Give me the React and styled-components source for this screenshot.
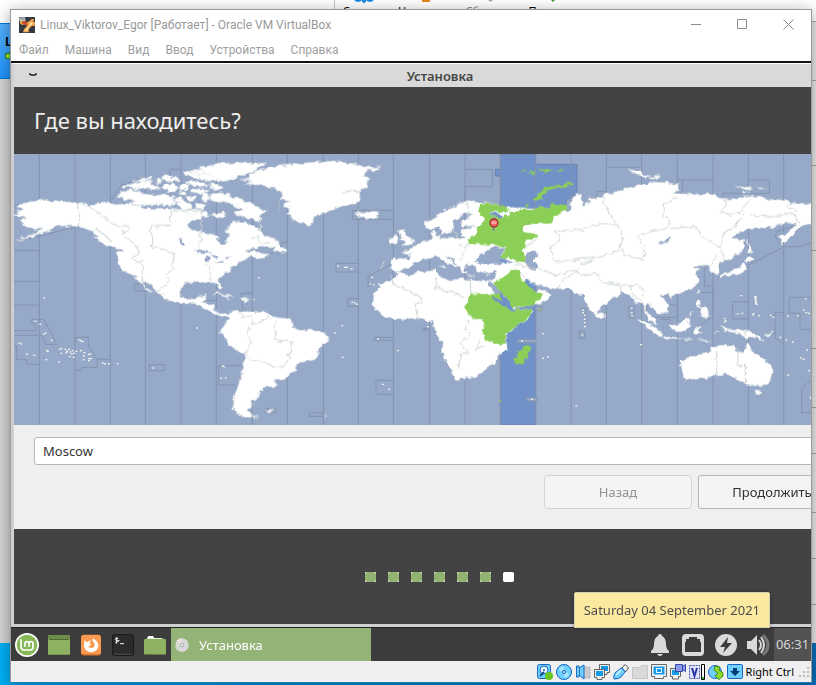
import React from "react";
import styled, { createGlobalStyle } from "styled-components";

const GlobalStyle = createGlobalStyle`
  *, *::before, *::after { box-sizing: border-box; }
  body { margin: 0; font-family: "Noto Sans", "Open Sans", sans-serif; }
  button, input { font: inherit; margin: 0; }
`;

/* ---------- host desktop ---------- */

const Desktop = styled.div`
  position: relative;
  height: 100vh;
  min-height: 560px;
  overflow: hidden;
  background: linear-gradient(90deg, #00b0f6 0%, #008fd8 50%, #0a6fbd 100%);
`;

const Manager = styled.div`
  display: flex;
  height: calc(100% - 42px);
  background: #fff;
  overflow: hidden;
`;

const MachineList = styled.div`
  flex: 0 0 335px;
  display: flex;
  flex-direction: column;
  border-right: 1px solid #c8c8c8;
`;

const ListHeader = styled.div`
  height: 23px;
`;

const MachineRow = styled.div`
  height: 56px;
  padding: 9px 5px;
  border: solid #0078d7;
  border-width: 1px 0;
  background: linear-gradient(#55b0ff, #1f93fb);
  color: #000;
  font-size: 12px;
  line-height: 18px;
  font-weight: 700;
`;

const MachineIcon = styled.svg`
  display: block;
`;

const ListBody = styled.div`
  flex: 1;
  background: #d4d4d4;
`;

const DetailsPane = styled.div`
  flex: 1;
  min-width: 0;
`;

const ManagerToolbar = styled.div`
  display: flex;
  height: 21px;
  gap: 10px;
  padding-left: 6px;
  overflow: hidden;
`;

const ManagerButton = styled.button`
  display: flex;
  flex-direction: column;
  align-items: center;
  width: ${(p) => p.$width}px;
  padding: 0;
  border: 0;
  background: none;
  color: ${(p) => (p.disabled ? "#888" : "#000")};
  font-size: 11px;
  line-height: 14px;
  white-space: nowrap;
`;

const DetailSection = styled.div`
  height: ${(p) => p.$height}px;
  border-top: 1px solid #a8a8a8;
  background: #ececec;
`;

/* ---------- virtual machine window ---------- */

const VmWindow = styled.section`
  position: absolute;
  inset: 9px 4px 2px 10px;
  display: flex;
  flex-direction: column;
  border: 1px solid #9a9a9a;
  border-bottom-color: #1a7fb8;
  background: #fff;
  box-shadow: 0 3px 14px rgba(0, 0, 0, 0.38);
`;

const TitleBar = styled.header`
  display: flex;
  align-items: center;
  height: 29px;
  padding-left: 8px;
  gap: 5px;
`;

const WindowTitle = styled.h1`
  flex: 1;
  margin: 0;
  color: #999;
  font-family: Roboto, sans-serif;
  font-size: 12px;
  font-weight: 400;
`;

const Captions = styled.div`
  display: flex;
`;

const CaptionButton = styled.button`
  display: grid;
  place-items: center;
  width: 46px;
  height: 28px;
  padding: 0;
  border: 0;
  background: none;
  color: #8c8c8c;
`;

const MenuBar = styled.nav`
  display: flex;
  height: 22px;
  padding-left: 8px;
  gap: 16px;
`;

const MenuItem = styled.button`
  padding: 0;
  border: 0;
  background: none;
  color: #a0a0a0;
  font-family: Roboto, sans-serif;
  font-size: 12px;
  line-height: 22px;
`;

const Guest = styled.div`
  position: relative;
  flex: 1;
  min-height: 0;
  display: flex;
  flex-direction: column;
  border-top: 2px solid #111;
  overflow: hidden;
`;

/* The guest display is wider than the window and is cut at the right edge. */
const Installer = styled.main`
  flex: 1;
  min-height: 0;
  display: flex;
  flex-direction: column;
  width: calc(100% + 58px);
  border: 3px solid #d0d0d0;
  border-top: 1px solid #fff;
  background: #434343;
`;

const InstallerTitle = styled.div`
  display: grid;
  grid-template-columns: 38px 1fr 38px;
  align-items: center;
  flex: none;
  height: 23px;
  background: #d9d9d9;
  color: #474747;
  font-size: 13px;
  font-weight: 600;
  text-align: center;
`;

const RollButton = styled.button`
  display: grid;
  place-items: center;
  padding: 0;
  border: 0;
  background: none;
  color: #2a2a2a;
`;

const Question = styled.h2`
  flex: none;
  margin: 0;
  padding: 18px 20px;
  color: #eee;
  font-size: 22px;
  line-height: 31px;
  font-weight: 400;
`;

const Map = styled.svg`
  display: block;
  flex: none;
  width: 100%;
  background: #97a9c8;
`;

const LocationForm = styled.form`
  flex: none;
  display: flex;
  flex-direction: column;
  gap: 10px;
  padding: 12px 20px 20px;
  background: #efefef;
`;

const CityInput = styled.input`
  width: 100%;
  height: 28px;
  padding: 0 8px;
  border: 1px solid #b6b6b6;
  border-radius: 3px;
  background: #fff;
  color: #333;
  font-size: 13px;
`;

const Actions = styled.div`
  display: flex;
  justify-content: flex-end;
  gap: 6px;
`;

const ActionButton = styled.button`
  width: 148px;
  height: 34px;
  padding: 0;
  border: 1px solid ${(p) => (p.disabled ? "#d4d4d4" : "#b6b6b6")};
  border-radius: 3px;
  background: #f4f4f4;
  color: ${(p) => (p.disabled ? "#929292" : "#303030")};
  font-size: 13px;
`;

const Steps = styled.div`
  flex: 1;
  display: flex;
  align-items: center;
  justify-content: center;
  gap: 12px;
  padding-right: 2px;
`;

const Step = styled.span`
  width: 11px;
  height: 10px;
  border-radius: ${(p) => (p.$current ? "2px" : "0")};
  background: ${(p) => (p.$current ? "#fff" : "#e4eade")};
  &::before {
    content: "";
    display: block;
    height: 100%;
    border-radius: 3px;
    background: ${(p) => (p.$current ? "#fff" : "#92b372")};
  }
`;

const Tooltip = styled.div`
  position: absolute;
  right: 41px;
  bottom: 33px;
  padding: 8px 9px;
  border: 1px solid #d8d2b4;
  border-radius: 2px 2px 0 0;
  background: #fbe9a0;
  color: #4c4c4c;
  font-size: 13px;
  line-height: 18px;
  box-shadow: 0 0 4px rgba(0, 0, 0, 0.3);
`;

const Panel = styled.footer`
  flex: none;
  display: flex;
  height: 34px;
  border-top: 1px solid #252525;
  background: #3c3c3c;
`;

const Launchers = styled.div`
  display: flex;
  align-items: center;
  gap: 8px;
  padding: 0 4px;
`;

const PanelButton = styled.button`
  display: grid;
  place-items: center;
  width: 24px;
  height: 32px;
  padding: 0;
  border: 0;
  background: none;
`;

const TaskButton = styled.button`
  display: flex;
  align-items: center;
  gap: 10px;
  width: 200px;
  padding: 0 4px;
  border: 0;
  background: #94b377;
  color: #fff;
  font-size: 13px;
`;

const Tray = styled.div`
  display: flex;
  align-items: center;
  gap: 9px;
  margin-left: auto;
  padding-right: 3px;
`;

const Clock = styled.time`
  width: 37px;
  background: #525252;
  color: #d6d6d6;
  font-size: 13px;
  line-height: 33px;
  text-align: center;
`;

const StatusBar = styled.footer`
  flex: none;
  display: flex;
  align-items: center;
  justify-content: flex-end;
  height: 21px;
  gap: 3px;
  background: #efefef;
  color: #000;
  font-size: 11px;
`;

const HostKey = styled.span`
  margin-right: 2px;
`;

/* ---------- drawings ---------- */

const VmLogo = () => (
  <svg width="16" height="16" viewBox="0 0 48 48" aria-hidden="true">
    <rect width="48" height="48" fill="#343944" />
    <path d="M4 12L15 9L24 17L34 10Q39 4 46 7L42 14L48 15V26L38 27L29 37L30 46H12Q14 34 24 28L18 22L9 24L2 18Z" fill="#f6a24a" />
    <path d="M9 14L18 12L26 22L23 27L17 20L9 20Z" fill="#c94124" />
    <path d="M35 15L43 18L38 23L27 34L25 42H17Q20 34 29 28Z" fill="#ffe3a4" />
    <rect x="1" y="1" width="18" height="11" fill="#c7cbd0" />
    <path d="M3 4h4v5M10 4v5h3V4zM16 4h2v5" fill="none" stroke="#4b5058" strokeWidth="1" />
  </svg>
);

const VERTICALS = [88, 195, 301, 406, 513, 619, 727, 832, 940, 1045, 1150, 1259, 1365, 1471, 1577, 1683, 1789, 1895, 2002, 2109, 2215, 2321, 2427, 2534];

const ISLETS = [
  [102, 443], [75, 514], [90, 523], [100, 553], [106, 549], [124, 571], [28, 579], [33, 582], [50, 612], [72, 616], [110, 602], [113, 604], [108, 629], [146, 636],
  [148, 598], [154, 596], [153, 610], [165, 598], [170, 604], [176, 598], [180, 606], [187, 602], [192, 610], [198, 604], [168, 608], [184, 612], [178, 620], [190, 622],
  [207, 570], [212, 572], [217, 575], [212, 602], [222, 608], [220, 618], [220, 629], [236, 613], [236, 626], [242, 626], [236, 632], [240, 612], [278, 639], [284, 642], [296, 641], [322, 641], [429, 654], [560, 534],
  [746, 383], [983, 348], [1004, 352], [1010, 352], [1024, 356], [1080, 403], [1090, 405], [1106, 402], [1026, 457], [1034, 459], [1040, 463], [996, 527], [974, 549], [997, 622], [1103, 567], [1163, 602], [1118, 703], [1136, 718], [638, 649], [632, 685], [646, 684],
  [1085, 382], [1253, 530], [1535, 573], [1598, 551], [1598, 625], [1613, 621], [1565, 748], [1698, 768],
  [1718, 480], [1718, 488], [1724, 496], [1724, 508], [1724, 518], [1724, 530], [1716, 555], [1864, 474], [1864, 488], [1866, 498], [1892, 584],
  [2193, 437], [2182, 492], [2196, 490], [2228, 495], [2230, 491], [2246, 497], [2282, 496], [2290, 502], [2333, 499], [2363, 497], [2380, 480], [2388, 488], [2396, 490], [2386, 446], [2334, 675], [2396, 662], [2143, 506], [2143, 516], [2146, 512], [2286, 545], [2310, 562], [2328, 570], [2348, 576], [2372, 624], [2380, 628], [2390, 600],
];

const WorldMap = () => (
  <Map viewBox="12 12 2556 813" role="img" aria-label="Карта часовых поясов">
    <defs>
      <filter id="coast" filterUnits="userSpaceOnUse" x="0" y="0" width="2580" height="840" colorInterpolationFilters="sRGB">
        <feTurbulence type="fractalNoise" baseFrequency="0.06" numOctaves="2" seed="4" result="noise" />
        <feDisplacementMap in="SourceGraphic" in2="noise" scale="17" xChannelSelector="R" yChannelSelector="G" />
      </filter>
    </defs>
    <path d="M1471 12H1577V43H1701V128L1668 152V200H1577V825H1471V78H1456V58H1471Z" fill="#7192c8" stroke="#6b81ac" strokeWidth="3" />
    <g fill="none" stroke="#8493af" strokeWidth="3">
      {VERTICALS.map((x) => (
        <path key={x} d={`M${x} 12V825`} />
      ))}
      <path d="M406 82L335 105L300 155M513 58H480V134M12 170L40 158M12 274L75 262L175 236L205 230M12 301H88V394H12M12 465H88V508M12 542H78V530L64 515V508H102L140 583H108L97 556H12M12 589H20V629H50V643H88M195 588V562H235V588L262 628H301M262 628V652H215V661H195M417 644H464V662H417ZM406 402H373V423H406" />
      <path d="M727 430H694V455L700 480M832 277H812V308L775 310M1150 181H1027V208H1150M978 340H1045V366H978ZM1150 340L1074 380V408L1095 406M1045 446H1013V469H1045M1150 562H1094V571H1150M1150 691H1098V733H1150M727 647H626V705H675M766 775H797V788H766ZM940 788H898V799H940M619 451H580" />
      <path d="M1365 58H1447V110H1365M1365 123V152M1259 535H1241V541H1259M1712 475H1728V525M1708 543H1724V565H1708Z" />
      <path d="M1577 568H1524V578H1577M1550 743H1582V753H1550ZM1577 470H1596V482H1577" fill="#97a9c8" />
      <path d="M1789 52H1895M1760 150V124H1789M2002 90H2109M2018 90V125M2215 90H2278V130H2138V155M2321 291L2215 345M2321 291L2295 260L2300 245L2380 218M2321 290H2370L2403 278M2083 345V408H2109V500L2060 532M2109 427H2073M2215 455H2168V507H2215V525M2321 487H2295V565L2321 580M2403 442H2338V490H2370V538H2403M1857 470H1872V502H1857ZM1910 460V502H2002M2002 465H1970M1950 508H1980V525M2403 690L2375 716V788H2403" />
    </g>
    <g filter="url(#coast)">
      <g fill="#fff" stroke="#d5ddda" strokeWidth="1" strokeLinejoin="round">
        <path d="M12 192L30 190 20 186 38 178 22 168 40 160 95 149 130 154 168 155 205 160 238 166 270 160 300 158 315 164 350 160 395 168 405 176 480 174 520 180 560 176 592 188 600 196 580 200 570 208 545 208 532 225 540 238 570 246 590 248 628 260 622 276 635 284 648 280 650 265 658 258 648 245 658 222 675 212 688 218 706 218 722 228 740 230 752 240 770 262 790 264 807 276 806 286 785 290 750 292 720 296 705 308 735 300 745 308 778 314 760 322 735 323 722 318 705 330 685 336 675 346 660 352 664 360 645 370 640 378 622 386 628 400 638 412 630 418 620 405 612 394 595 398 570 394 548 398 530 398 515 408 512 425 515 440 530 448 555 447 566 438 590 434 585 450 575 456 598 461 612 462 614 482 632 492 652 488 660 494 655 500 630 498 612 490 590 478 575 474 560 460 515 462 480 452 460 446 455 436 435 420 415 400 395 388 400 402 412 416 430 426 412 422 392 400 378 382 340 362 325 345 325 305 335 300 310 290 280 283 250 260 262 258 240 240 205 230 175 228 155 232 140 226 115 240 122 244 85 252 60 264 15 272 60 258 85 244 100 236 70 238 60 232 35 226 42 218 28 212 50 205 18 196Z" />
        <path d="M328 130L320 146 332 144 350 152 370 150 365 160 395 166 440 164 480 168 510 156 485 150 490 142 470 132 440 136 400 132 385 122 350 120ZM335 105L332 112 360 110 380 118 410 112 430 122 452 116 448 106 420 104 425 96 400 92 380 100ZM365 96L400 84 432 80 422 90ZM455 80L470 76 486 84 500 78 512 90 485 96 465 90ZM456 108L485 100 505 112 498 126 470 124ZM505 106L540 100 535 118 512 120ZM492 150L512 140 520 154 540 162 545 175 520 178 505 166ZM545 118L575 116 600 122 570 132 540 128ZM525 140L560 138 555 150 535 152ZM525 96L560 92 598 104 580 112 545 108ZM522 66L555 60 560 70 600 70 630 90 600 94 560 86 530 78ZM560 55L600 46 640 40 700 38 770 40 762 48 735 54 740 60 710 72 690 80 660 86 640 94 610 90 590 70ZM600 100L640 106 632 120 600 118ZM520 188L545 180 560 190 540 198ZM440 86L456 90 452 100 436 96ZM540 66L575 60 590 68 560 74ZM585 132L600 140 590 156 578 152ZM510 124L530 126 524 136 508 134Z" />
        <path d="M600 132L630 128 655 132 668 142 690 145 712 158 728 160 740 172 772 184 755 190 748 196 755 206 748 214 730 208 712 206 698 198 680 198 675 186 700 182 670 164 640 158 615 156 600 150ZM575 128L596 130 596 152 575 148ZM560 160L590 164 580 178 560 174ZM602 196L622 190 640 188 648 198 620 204ZM792 290L805 284 828 298 830 307 812 306 788 302Z" />
        <path d="M608 430L622 428 650 434 672 442 655 440 630 434ZM688 445L704 442 720 448 700 452ZM650 449L662 450 654 453ZM728 447L736 448 730 450Z" />
        <path d="M690 88L720 82 722 70 770 55 800 48 850 44 890 38 975 33 1010 40 1048 40 1052 50 1116 52 1095 62 1075 60 1060 74 1080 88 1070 100 1074 112 1050 120 1048 130 1054 148 1040 160 1018 164 1000 168 975 175 950 188 920 192 912 205 908 216 898 226 890 222 862 218 845 204 830 190 845 180 820 165 835 156 812 146 818 136 808 120 795 118 770 108 740 104 705 102 722 96Z" />
        <path d="M1034 188L1050 186 1060 190 1075 184 1098 184 1109 194 1098 202 1075 207 1056 203 1046 204 1050 196Z" />
        <path d="M664 485L684 480 692 488 710 484 745 488 775 485 790 500 840 508 850 520 848 532 862 540 900 540 940 548 958 560 952 575 930 592 925 615 910 630 880 636 858 648 860 660 840 672 822 690 792 692 802 704 790 710 760 712 755 724 745 722 750 735 742 748 724 756 730 764 715 775 716 787 728 797 745 800 710 803 685 797 668 775 668 758 675 735 682 715 690 690 700 655 705 612 675 598 660 585 645 562 630 548 636 532 650 515 660 508 654 496Z" />
        <path d="M766 781L780 779 796 782 780 785ZM940 797L948 796 950 799ZM638 647H644V650H638Z" />
      </g>
      <g transform="translate(1050 0)" fill="#fff" stroke="#d5ddda" strokeWidth="1" strokeLinejoin="round">
        <path d="M95 328L130 328 148 328 152 318 125 304 150 298 165 288 195 272 215 268 222 258 212 250 225 243 232 262 250 265 300 265 318 262 303 255 303 240 335 232 350 230 305 228 305 212 335 192 320 186 308 198 275 215 284 228 275 236 274 246 260 252 245 250 235 228 215 240 195 232 192 218 225 203 255 182 300 160 340 152 375 158 440 172 530 174 620 168 617 182 630 182 632 158 640 148 648 132 655 130 665 133 662 145 670 160 665 170 678 168 678 156 690 158 684 146 700 142 724 146 732 132 770 128 800 114 850 105 880 96 920 98 958 104 955 120 940 130 1012 133 1064 132 1070 142 1094 148 1135 144 1158 136 1190 140 1230 148 1285 152 1290 160 1370 160 1370 225 1325 225 1305 250 1285 268 1265 285 1260 258 1288 245 1308 223 1280 218 1240 233 1170 235 1135 250 1113 264 1150 268 1155 290 1140 312 1105 328 1080 336 1072 348 1075 370 1055 370 1050 358 1040 348 1010 346 1000 352 1020 355 1005 372 1018 392 1010 405 985 422 950 430 930 442 920 434 900 434 930 465 925 485 900 492 885 478 865 462 856 466 860 490 888 508 892 522 870 514 855 490 850 462 828 460 810 435 785 428 775 436 735 460 720 475 710 492 700 490 682 465 672 432 660 435 640 424 625 415 590 416 560 414 540 408 520 400 495 388 500 404 530 430 535 418 555 422 575 432 568 446 545 458 465 478 440 445 400 400 385 394 405 388 410 362 375 368 350 362 345 345 320 343 312 355 320 372 306 370 300 350 280 330 265 320 258 320 275 334 296 348 290 356 278 346 250 330 228 318 205 326 180 330 160 342 150 355 130 360 112 364 95 358Z" />
        <path d="M115 365L145 376 175 365 230 361 232 378 260 388 275 396 290 383 320 388 350 392 385 394 388 408 405 432 418 452 440 475 460 482 515 478 520 486 500 510 465 532 435 555 440 578 442 600 410 618 405 640 388 646 370 668 350 682 312 684 290 690 280 678 270 655 258 635 252 615 240 608 250 580 238 562 222 540 220 514 205 516 190 506 165 504 130 508 100 510 78 502 60 490 38 470 42 432 60 410 75 395 105 385Z" />
        <path d="M115 241L128 238 138 250 148 262 165 270 160 282 140 286 125 285 136 278 120 270 132 262 120 256ZM87 268L105 258 112 264 108 278 90 282ZM232 262L240 252 244 262ZM240 344L256 348 262 358 246 352ZM320 376L345 378 330 380ZM378 372L390 370 384 376Z" />
        <path d="M708 490L722 485 735 498 725 506 710 502ZM802 60L840 62 845 70 870 78 855 82 830 72ZM865 84L895 76 902 82 875 88ZM1128 112L1150 107 1178 114 1165 118ZM1190 112L1225 116 1200 117ZM1148 124L1170 128 1150 130ZM1160 265L1170 290 1177 306 1165 306 1164 290ZM1162 320L1185 326 1175 334 1155 334ZM1152 340L1160 344 1156 362 1140 372 1112 372 1095 378 1078 384 1080 376 1105 366 1135 356ZM1010 422L1018 418 1014 432ZM1008 452L1020 450 1022 462 1014 466 1024 478 1010 472ZM1022 474L1032 472 1044 484 1046 498 1032 502 1028 490ZM1020 496L1034 490 1050 498 1040 506ZM988 500L998 486 990 492Z" />
        <path d="M832 508L850 512 880 530 905 546 904 558 885 552 860 532ZM905 560L930 560 960 564 982 570 1000 569 980 566 940 566 915 566ZM930 522L945 526 968 512 982 504 994 508 982 518 994 526 978 542 955 546 935 540ZM1005 532L1025 530 1015 538 1028 550 1018 548 1008 554 1000 548ZM1012 566L1030 570 1052 572 1034 575ZM1085 530L1105 536 1120 540 1140 540 1172 545 1195 560 1218 574 1195 568 1180 560 1160 564 1140 552 1120 548 1095 542ZM1210 555L1236 548 1225 558ZM1060 545L1080 544 1068 548Z" />
        <path d="M962 632L975 628 1010 618 1030 605 1045 608 1054 596 1070 592 1084 586 1118 584 1126 600 1150 612 1158 580 1168 582 1176 606 1200 618 1225 640 1242 655 1242 665 1230 685 1218 705 1192 708 1160 706 1148 692 1136 690 1115 680 1100 675 1070 674 1040 684 1000 688 976 690 970 680 964 650ZM1182 724L1205 722 1206 728 1194 736 1184 732ZM1350 742L1370 735 1395 745 1380 754 1352 750Z" />
      </g>
      <g fill="#97a9c8">
        <path d="M1395 330L1410 312 1428 310 1422 305 1442 296 1460 290 1486 296 1472 315 1490 325 1508 340 1490 344 1450 340 1410 342ZM1545 322L1550 308 1575 306 1588 318 1572 328 1570 340 1586 345 1578 362 1560 360 1550 344Z" />
        <path d="M550 302L575 298 592 306 612 308 582 312ZM586 322L600 316 596 336 586 334ZM602 312L624 320 618 326 606 318ZM612 338L640 332 632 338ZM642 326L668 320 650 328ZM502 268L512 266 522 286 516 286ZM308 292L338 300 336 304 312 296ZM616 264L650 266 632 284ZM1944 282L1965 272 1978 255 1983 262 1975 275 1955 282Z" />
      </g>
      <g fill="none" stroke="#cdd6d4" strokeWidth="3" strokeLinejoin="round">
        <path d="M206 162V228M238 166L270 190 300 215 328 228H355V243H335L345 260 375 282 390 310 366 325 372 334H397V388M406 402L397 388M484 182H573V200M482 182V228H425V294H465L472 304 492 312 488 355 472 372 475 390 465 410 445 420 468 436M565 250L576 265 562 282 578 300M586 340L600 352V395M573 202V255M748 196L752 240M727 262L745 258 745 270 760 282 780 276M1000 130L1020 122 1048 124" />
        <path d="M684 488L698 500 720 498 730 510 727 524 765 512 775 495M800 508L792 535 800 545 790 565 808 574H848L842 600 832 618 840 622 820 650 792 652 770 640 720 628 706 610M706 610L726 575 710 552 718 530" />
        <path d="M1122 330L1114 362M1145 378L1144 398 1234 443 1232 460 1215 465 1222 500M1280 384L1275 410 1305 422 1365 440M1381 388L1382 432M1375 512L1365 535 1378 555 1352 580 1378 610 1352 612 1346 658M1415 570L1395 600 1422 590M1345 280L1370 298M1372 280L1368 292M1323 230L1350 270M1363 305L1352 330M1370 160L1375 205M1510 338L1550 352M1580 270L1545 290M1625 290L1650 270 1635 242 1710 238" />
        <path d="M1710 242L1750 224H1826L1838 260 1830 295 1850 318 1898 330 1905 300 1885 260 1905 248 1970 235 1980 215 1960 195 1960 160 2000 145M1780 142L1785 165 1815 220M1980 235L2055 230 2078 260 2135 295 2140 325 2160 330M2145 148L2148 170 2130 185 2160 195 2195 185 2220 150M2200 190L2170 235 2140 250 2135 285M2220 195L2290 200 2350 190 2370 225M2330 165L2360 180" />
        <path d="M1710 345L1770 320 1830 298M1550 350L1615 365 1640 378 1690 360 1710 370M1690 325L1760 322M1625 285L1620 305 1635 335 1710 330M1710 375L1760 370 1775 395 1865 410 1880 402 1905 425 1895 440M1832 405V435M1640 415L1665 385 1705 360M1860 402L1865 430 1895 455M2120 315L2100 350 2080 345M1520 360L1545 380M1560 350L1540 330" />
        <path d="M2120 594V674M2184 600V646H2206V706M2206 542V566" />
      </g>
      <g transform="translate(1050 0)" fill="#8ccf57">
        <path d="M358 162L380 160 400 164 430 168 448 180 440 188 415 186 390 185 398 198 428 202 435 192 448 200 452 182 465 186 495 175 510 180 530 172 570 170 580 160 595 162 620 165 622 178 600 190 578 200 577 220 540 222 510 223 490 225 488 240 500 248 530 252 538 262 525 266 500 272 490 278 500 290 485 305 497 322 495 337 468 333 455 326 420 320 438 295 400 282 370 286 350 280 322 282 325 266 345 258 352 246 350 230 375 212 370 200 358 195Z" />
        <path d="M520 148L540 125 556 112 590 104 640 97 642 103 600 112 568 120 548 135 550 148 530 152ZM478 62L500 60 495 66ZM505 66L530 62 520 70ZM535 60L560 56 580 60 560 66ZM590 60L618 58 600 64ZM418 750H427V755H418ZM498 164L508 166 500 170ZM535 474H542V478H535Z" />
        <path d="M455 360L475 360 482 368 480 380 500 400 530 430 548 430 546 442 528 455 525 465 460 475 440 445 400 402 412 394 425 382 440 375Z" />
        <path d="M332 432H418L430 458 440 475 460 482 518 478 515 492 490 515 465 532 435 550 435 565 440 580 402 582 395 574 372 568 375 552 364 548 372 532 368 512 345 510 325 492 312 470 325 455Z" />
        <path d="M502 588L508 586 513 598 505 612 492 640 482 644 465 642 462 630 470 618 468 606 486 600Z" />
      </g>
      <g fill="#7192c8">
        <path d="M1438 440L1448 438 1475 452 1495 468 1514 478 1508 481 1490 476 1470 460ZM1472 324L1494 330 1490 342 1472 335ZM1545 392L1560 400 1570 415 1552 408ZM1440 186L1465 190 1482 198 1470 202 1448 198Z" />
      </g>
    </g>
    <g fill="#eff1e9">
      {ISLETS.map(([x, y]) => (
        <rect key={`${x}-${y}`} x={x - 2} y={y - 2} width="6" height="4" />
      ))}
      <path d="M2232 438L2240 438 2240 455 2244 465 2236 464Z" />
    </g>
    <path d="M674 735L668 760 675 785 700 800M808 148V182" fill="none" stroke="#b5c0c5" strokeWidth="4" strokeDasharray="4 4" />
    <path d="M258 236L290 260 305 278" fill="none" stroke="#cbd4d8" strokeWidth="7" strokeDasharray="4 4" />
    <path d="M1451 224V242" stroke="#8a8f8a" strokeWidth="7" />
    <circle cx="1452" cy="219" r="12" fill="#f46a6a" stroke="#a52d2d" strokeWidth="4" />
    <path d="M1444 214H1460V222H1444Z" fill="#f9a4a0" />
  </Map>
);

const MintIcon = () => (
  <svg width="24" height="24" viewBox="0 0 72 72" aria-hidden="true">
    <circle cx="36" cy="36" r="36" fill="#fff" />
    <circle cx="36" cy="36" r="31" fill="#87b858" />
    <path d="M18 19V42Q18 51 27 51H46Q54 51 54 43V32Q54 26 48 26T42 32V41M42 32Q42 26 36 26T30 32V41" fill="none" stroke="#fff" strokeWidth="5" />
  </svg>
);

const ShowDesktopIcon = () => (
  <svg width="22" height="20" viewBox="0 0 22 20" aria-hidden="true">
    <rect width="22" height="20" rx="1" fill="#8eb261" />
    <path d="M0 1Q0 0 1 0H21Q22 0 22 1V4H0Z" fill="#6e8c4b" />
    <path d="M1 4.5H21" stroke="#4e6734" />
    <path d="M0 19.5H22" stroke="#77984f" />
  </svg>
);

const FirefoxIcon = () => (
  <svg width="22" height="22" viewBox="0 0 66 66" aria-hidden="true">
    <rect x="3" y="2" width="60" height="62" rx="9" fill="#fa9a50" />
    <path d="M3 54V56Q3 64 11 64H55Q63 64 63 56V54Q63 61 55 61H11Q3 61 3 54Z" fill="#d76925" />
    <path d="M13 19L21 25Q26 20 33 19L28 28L34 31L29 36H24Q28 43 36 42Q44 40 44 29L38 22V13Q54 21 55 34Q54 53 35 55Q15 54 12 36Z" fill="#fff" />
  </svg>
);

const TerminalIcon = () => (
  <svg width="22" height="22" viewBox="0 0 66 66" aria-hidden="true">
    <rect x="1" y="1" width="64" height="64" rx="9" fill="#2b2b2b" stroke="#161616" strokeWidth="3" />
    <path d="M5 58Q5 61 10 61H56Q61 61 61 58" fill="none" stroke="#606060" strokeWidth="2" />
    <path d="M19 14Q10 10 10 16T19 20T10 26M14 9V29M24 29H36" fill="none" stroke="#f2f2f2" strokeWidth="3" />
  </svg>
);

const FolderIcon = () => (
  <svg width="22" height="20" viewBox="0 0 66 60" aria-hidden="true">
    <path d="M9 10L13 3H27L31 9H55V18H9Z" fill="#fff" />
    <path d="M0 16Q0 11 5 11H61Q66 11 66 16V57H0Z" fill="#8eb261" />
    <path d="M1 58H65" stroke="#6c8a4b" strokeWidth="3" />
  </svg>
);

const DiscIcon = () => (
  <svg width="14" height="14" viewBox="0 0 42 42" aria-hidden="true">
    <circle cx="21" cy="21" r="20" fill="#dadada" />
    <path d="M21 21L5 9Q11 2 19 1Z" fill="#efe4e2" />
    <path d="M21 21L36 33Q29 40 23 41Z" fill="#e0d4e3" />
    <path d="M21 21L1 27Q4 36 11 39Z" fill="#cadbcb" />
    <circle cx="21" cy="21" r="7" fill="#b4b4b4" />
    <circle cx="21" cy="21" r="3" fill="#f9f9f9" />
  </svg>
);

const TRAY = [
  {
    label: "Уведомления",
    art: (
      <>
        <path d="M12 1Q14 1 14 3Q18 5 18 11Q18 16 21 18V20H3V18Q6 16 6 11Q6 5 10 3Q10 1 12 1Z" fill="#dadada" />
        <path d="M9 21H15Q14 23 12 23T9 21Z" fill="#dadada" />
      </>
    ),
  },
  {
    label: "Сеть",
    art: (
      <path
        d="M5 1H19Q23 1 23 5V19Q23 23 19 23H5Q1 23 1 19V5Q1 1 5 1ZM8 4V6H5V9H4V19H20V9H19V6H16V4Z"
        fill="#dadada"
        fillRule="evenodd"
      />
    ),
  },
  {
    label: "Питание",
    art: (
      <>
        <circle cx="12" cy="12" r="11" fill="#dadada" />
        <path d="M14 4L6 14H11L9 20L18 10H13Z" fill="#3c3c3c" />
      </>
    ),
  },
  {
    label: "Громкость",
    art: (
      <>
        <path d="M0 8H4L10 2V22L4 16H0Z" fill="#dadada" />
        <path d="M12 7Q16 12 12 17" fill="none" stroke="#dadada" strokeWidth="2" />
        <path d="M14 4Q20 12 14 20" fill="none" stroke="#dadada" strokeWidth="2" />
        <path d="M16 2Q26 12 16 22" fill="none" stroke="#777" strokeWidth="3" />
      </>
    ),
  },
];

const BLUE = { fill: "#6fd0fd", stroke: "#1766c4", strokeWidth: 1 };

const DEVICES = [
  {
    label: "Жёсткий диск",
    art: (
      <>
        <rect x="0.5" y="0.5" width="13" height="14" rx="2" {...BLUE} />
        <circle cx="7" cy="6" r="4" fill="#e9f8ff" stroke="#1768b9" />
        <circle cx="7" cy="6" r="1" fill="#1768b9" />
        <path d="M3 12L7 8" stroke="#174c8a" strokeWidth="2" />
        <circle cx="12" cy="12" r="4" fill="#68c51f" />
      </>
    ),
  },
  {
    label: "Оптический диск",
    art: (
      <>
        <circle cx="8" cy="8" r="7.5" {...BLUE} />
        <path d="M3 5Q5 2 8 2L8 6Q6 6 5 8ZM13 11Q11 14 8 14L8 10Q10 10 11 8Z" fill="#a7e3fd" />
        <circle cx="8" cy="8" r="1.5" fill="#fff" stroke="#145bb4" />
      </>
    ),
  },
  {
    label: "Аудио",
    art: (
      <>
        <path d="M8 3H15V14H8Z" fill="#ccc" stroke="#aaa" strokeDasharray="2 1" />
        <path d="M1.5 2H4V4L9 1V15L4 11V13H1.5Z" {...BLUE} />
        <path d="M4.5 3V12" stroke="#2075bf" />
      </>
    ),
  },
  {
    label: "Сеть",
    art: (
      <>
        <path d="M5.5 0.5H15.5V8.5H13V10.5H8V8.5H5.5Z" fill="#eee" stroke="#666" />
        <rect x="7" y="2" width="7" height="5" fill="#1593e6" />
        <path d="M0.5 5.5H10.5V13.5H8V15.5H3V13.5H0.5Z" fill="#eee" stroke="#666" />
        <rect x="2" y="7" width="7" height="5" fill="#159be6" />
      </>
    ),
  },
  {
    label: "USB",
    art: (
      <>
        <path d="M9 4L12 0.5L15.5 4L12.5 8Z" fill="#eee" stroke="#555" />
        <path d="M2 9L8 4Q10 4 12 8L8 13Q6 15 1 15Q0 12 2 9Z" {...BLUE} />
        <path d="M3 11L8 6" stroke="#b9ecff" strokeWidth="2" />
      </>
    ),
  },
  {
    label: "Общие папки",
    art: <path d="M0.5 3.5H8L10 1.5H15.5V14.5H0.5Z" fill="#d8d8d8" stroke="#c6c6c6" />,
  },
  {
    label: "Дисплей",
    art: (
      <>
        <path d="M0.5 0.5H15.5V12.5H12.5V14.5H3.5V12.5H0.5Z" fill="#f2f2f2" stroke="#666" />
        <rect x="2.5" y="2.5" width="11" height="8" fill="#179be9" />
        <rect x="5.5" y="4.5" width="5" height="4" fill="#179be9" stroke="#e4f7ff" />
      </>
    ),
  },
  {
    label: "Запись",
    art: (
      <>
        <path d="M0.5 4.5H10.5V12.5H8.5V15H2.5V12.5H0.5Z" fill="#eee" stroke="#666" />
        <rect x="2" y="6" width="7" height="5" fill="#179be9" />
        <path d="M5.5 0.5H12.5V7.5H5.5ZM12.5 2.5L15.5 0.5V7.5L12.5 5.5Z" fill="#8b9aeb" stroke="#3848ad" />
      </>
    ),
  },
  {
    label: "Процессор",
    art: (
      <>
        <path d="M0.5 1.5H10.5V14.5H0.5Z" fill="#dfe3ff" stroke="#4a57bb" strokeDasharray="2 1" />
        <path d="M3 4L5.5 12L8 4" fill="none" stroke="#2835a0" strokeWidth="2" />
        <path d="M12.500 0.5H15.5V15.5H12.500Z" fill="#fff" stroke="#000" />
        <path d="M14 13V15" stroke="#25bc30" strokeWidth="2" />
      </>
    ),
  },
  {
    label: "Мышь",
    art: (
      <>
        <circle cx="7" cy="8" r="6.5" {...BLUE} />
        <path d="M7 2L12 3L11 6L15 9V12L11 15.5L7 12L10 9L6 6Z" fill="#8fd92f" stroke="#3c8a17" />
      </>
    ),
  },
  {
    label: "Клавиатура",
    art: (
      <>
        <rect x="0.5" y="0.5" width="15" height="14" rx="1" {...BLUE} />
        <path d="M6 4H10V7H13L8 12L3 7H6Z" fill="#003c78" />
      </>
    ),
  },
];

const TOOLBAR = [
  { label: "Создать", width: 46, art: <path d="M1 0L4 1L7 0M8 0L10 2L12 0M13 0L16 1L19 0" fill="none" stroke="#1683dc" strokeWidth="2" /> },
  { label: "Настроить", width: 58, art: <path d="M6 0H14V1Q14 2 13 2H7Q6 2 6 1Z" fill="#e88418" /> },
  { label: "Сбросить", width: 51, disabled: true, art: <path d="M7 0H12L9.5 2Z" fill="#aaa" /> },
  { label: "Показать", width: 54, art: <path d="M8 0H12L10 2Z" fill="#3f9c24" /> },
];

const CAPTIONS = [
  { label: "Свернуть", d: "M0 5.5H10" },
  { label: "Развернуть", d: "M0.5 0.5H9.5V9.5H0.5Z" },
  { label: "Закрыть", d: "M0.5 0.5L10.5 10.5M10.5 0.5L0.5 10.5" },
];

const MENU = ["Файл", "Машина", "Вид", "Ввод", "Устройства", "Справка"];
const SECTIONS = [59, 85, 85, 98, 59, 46, 59, 46, 46, 60];
const LAUNCHERS = [
  ["Меню", MintIcon],
  ["Показать рабочий стол", ShowDesktopIcon],
  ["Firefox", FirefoxIcon],
  ["Терминал", TerminalIcon],
  ["Файлы", FolderIcon],
];

export default function App() {
  return (
    <>
      <GlobalStyle />
      <Desktop>
        <Manager>
          <MachineList>
            <ListHeader />
            <MachineRow>
              L
              <MachineIcon width="10" height="10" viewBox="0 0 10 10" aria-hidden="true">
                <path d="M0.5 2.500H5V0L10 5L5 9V7.500H0.5Z" fill="#8be03a" stroke="#2f7d14" />
              </MachineIcon>
            </MachineRow>
            <ListBody />
          </MachineList>
          <DetailsPane>
            <ManagerToolbar>
              {TOOLBAR.map(({ label, width, disabled, art }) => (
                <ManagerButton key={label} $width={width} disabled={disabled}>
                  <svg width="20" height="4" viewBox="0 0 20 4" aria-hidden="true">{art}</svg>
                  {label}
                </ManagerButton>
              ))}
            </ManagerToolbar>
            {SECTIONS.map((height, i) => (
              <DetailSection key={i} $height={height} />
            ))}
          </DetailsPane>
        </Manager>

        <VmWindow>
          <TitleBar>
            <VmLogo />
            <WindowTitle>Linux_Viktorov_Egor [Работает] - Oracle VM VirtualBox</WindowTitle>
            <Captions>
              {CAPTIONS.map(({ label, d }) => (
                <CaptionButton key={label} aria-label={label}>
                  <svg width="11" height="11" viewBox="0 0 11 11" aria-hidden="true">
                    <path d={d} fill="none" stroke="currentColor" />
                  </svg>
                </CaptionButton>
              ))}
            </Captions>
          </TitleBar>
          <MenuBar>
            {MENU.map((item) => (
              <MenuItem key={item}>{item}</MenuItem>
            ))}
          </MenuBar>
          <Guest>
            <Installer>
              <InstallerTitle>
                <RollButton aria-label="Меню окна">
                  <svg width="8" height="6" viewBox="0 0 8 6" aria-hidden="true">
                    <path d="M0 0.5Q4 4 8 0.5" fill="none" stroke="currentColor" strokeWidth="1.5" />
                  </svg>
                </RollButton>
                Установка
              </InstallerTitle>
              <Question>Где вы находитесь?</Question>
              <WorldMap />
              <LocationForm onSubmit={(e) => e.preventDefault()}>
                <CityInput aria-label="Город" defaultValue="Moscow" />
                <Actions>
                  <ActionButton type="button" disabled>Назад</ActionButton>
                  <ActionButton type="submit">Продолжить</ActionButton>
                </Actions>
              </LocationForm>
              <Steps>
                {[0, 1, 2, 3, 4, 5, 6].map((n) => (
                  <Step key={n} $current={n === 6} />
                ))}
              </Steps>
            </Installer>
            <Panel>
              <Launchers>
                {LAUNCHERS.map(([label, Icon]) => (
                  <PanelButton key={label} aria-label={label}>
                    <Icon />
                  </PanelButton>
                ))}
              </Launchers>
              <TaskButton>
                <DiscIcon />
                Установка
              </TaskButton>
              <Tray>
                {TRAY.map(({ label, art }) => (
                  <PanelButton key={label} aria-label={label}>
                    <svg width="24" height="24" viewBox="0 0 24 24" aria-hidden="true">{art}</svg>
                  </PanelButton>
                ))}
              </Tray>
              <Clock>06:31</Clock>
            </Panel>
            <Tooltip role="tooltip">Saturday 04 September 2021</Tooltip>
          </Guest>
          <StatusBar>
            {DEVICES.map(({ label, art }) => (
              <svg key={label} width="16" height="16" viewBox="0 0 16 16" role="img" aria-label={label}>{art}</svg>
            ))}
            <HostKey>Right Ctrl</HostKey>
            <svg width="12" height="12" viewBox="0 0 12 12" aria-hidden="true">
              <path d="M8 1H10V3H8ZM8 5H10V7H8ZM8 9H10V11H8ZM4 5H6V7H4ZM4 9H6V11H4ZM0 9H2V11H0Z" fill="#bcbcbc" />
            </svg>
          </StatusBar>
        </VmWindow>
      </Desktop>
    </>
  );
}
